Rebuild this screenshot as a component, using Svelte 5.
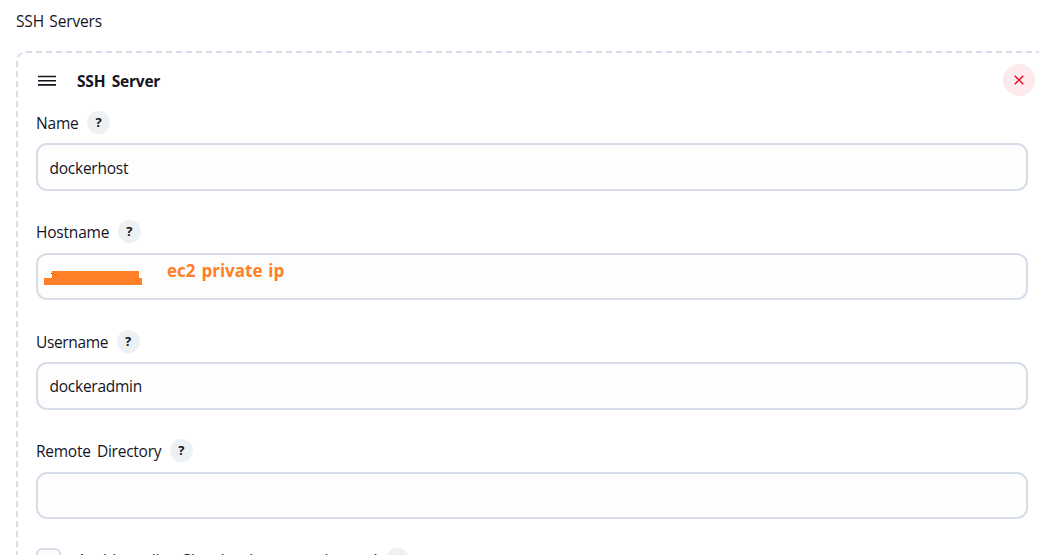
<script lang="ts">
	type Field = { label: string; value: string; masked?: boolean; cls: string };

	let fields: Field[] = [
		{ label: 'Name', value: 'dockerhost', cls: 'name' },
		{ label: 'Hostname', value: '', masked: true, cls: 'host' },
		{ label: 'Username', value: 'dockeradmin', cls: 'user' },
		{ label: 'Remote Directory', value: '', cls: 'dir' }
	];
</script>

<main class="page">
	<div class="section-title">SSH Servers</div>

	<section class="card">
		<header class="card-header">
			<svg class="drag-handle" viewBox="0 0 18 12" fill="none" stroke="currentColor" stroke-width="1.6">
				<path d="M0 1.5h18M0 5.7h18M0 9.9h18" />
			</svg>
			<span class="card-title">SSH Server</span>
			<button class="remove" aria-label="Delete">
				<svg viewBox="0 0 10 10" fill="none" stroke="currentColor" stroke-width="1.3">
					<path d="M0.7 0.7l8.6 8.6M9.3 0.7l-8.6 8.6" />
				</svg>
			</button>
		</header>

		{#each fields as field}
			<div class="field {field.cls}">
				<div class="label-row">
					<span class="label">{field.label}</span>
					<button class="help">?</button>
				</div>
				<div class="input">
					<span class="value">{field.value}</span>
					{#if field.masked}
						<svg class="mask" viewBox="0 0 98 14" shape-rendering="crispEdges">
							<path d="M8 0h87v7h3v7H0V7h8z" fill="#ff7f27" />
							<path d="M7 2h1v1h-1z" fill="#333" />
						</svg>
						<span class="note">ec2 private ip</span>
					{/if}
				</div>
			</div>
		{/each}

		<div class="check-row">
			<span class="checkbox"></span>
			<span class="check-label">Avoid sending files that have not changed</span>
			<button class="help">?</button>
		</div>
	</section>
</main>

<style>
	:global(body) {
		margin: 0;
		overflow: hidden;
		background: #fff;
	}

	.page {
		box-sizing: border-box;
		width: 1039px;
		height: 555px;
		padding: 9px 0 0 16px;
		overflow: hidden;
		color: #14141f;
		font-family: 'Open Sans', 'Noto Sans', sans-serif;
		font-size: 16px;
		line-height: 24px;
		white-space: nowrap;
	}

	.section-title {
		margin-bottom: 18px;
		font-size: 15.5px;
		letter-spacing: -0.15px;
		word-spacing: 1.5px;
	}

	.card {
		box-sizing: border-box;
		width: 1032px;
		height: 640px;
		padding: 10px 9px 0 18px;
		border: 2px dashed #d6dde8;
		border-radius: 10px;
	}

	.card-header {
		display: flex;
		align-items: center;
		height: 34px;
	}

	.drag-handle {
		width: 18px;
		height: 12px;
		margin: 1px 0 0 2px;
	}

	.card-title {
		margin: 1px 0 0 21px;
		font-size: 15.5px;
		font-weight: 700;
		letter-spacing: -0.2px;
		word-spacing: 2.5px;
	}

	button {
		padding: 0;
		border: 0;
		font-family: inherit;
	}

	.remove {
		display: flex;
		align-items: center;
		justify-content: center;
		width: 32px;
		height: 32px;
		margin: -1px 2px 0 auto;
		border-radius: 50%;
		background: #fdeaec;
		color: #e6001f;
	}

	.remove svg {
		width: 10px;
		height: 10px;
	}

	.field {
		height: 109.6px;
	}

	.label-row {
		box-sizing: border-box;
		display: flex;
		align-items: center;
		height: 46px;
		padding-top: 4px;
		gap: 8.5px;
	}

	.label {
		padding-top: 1px;
		font-size: 15.5px;
		letter-spacing: -0.2px;
	}

	.user .label {
		letter-spacing: -0.35px;
	}

	.dir .label {
		letter-spacing: -0.25px;
		word-spacing: 2.5px;
	}

	.value {
		font-size: 15.5px;
		letter-spacing: -0.25px;
	}

	.name .value {
		padding-top: 1px;
	}

	.help {
		flex-shrink: 0;
		width: 23px;
		height: 23px;
		border-radius: 50%;
		background: #edf1f4;
		color: #14141f;
		font-size: 13px;
		font-weight: 700;
		line-height: 23px;
	}

	.input {
		position: relative;
		box-sizing: border-box;
		display: flex;
		align-items: center;
		width: 992px;
		height: 47.5px;
		padding: 1px 11.5px 0;
		border: 2px solid #d6dde8;
		border-radius: 11px;
		background: #fdfdfd;
	}

	/* redaction and note drawn over the hostname value */
	.mask {
		position: absolute;
		top: 16px;
		left: 6px;
		width: 98px;
		height: 14px;
	}

	.note {
		position: absolute;
		top: 4px;
		left: 129px;
		color: #ff7f27;
		font-size: 17px;
		font-weight: 700;
		word-spacing: 1.5px;
	}

	.check-row {
		display: flex;
		align-items: flex-start;
		padding-top: 12.6px;
	}

	.checkbox {
		box-sizing: border-box;
		width: 25px;
		height: 25px;
		margin-right: 16px;
		border: 2px solid #d6dde8;
		border-radius: 6px;
		background: #fdfdfd;
	}

	.check-label {
		margin-right: 9px;
		font-size: 15.5px;
		letter-spacing: -0.25px;
		word-spacing: 1.7px;
	}
</style>
